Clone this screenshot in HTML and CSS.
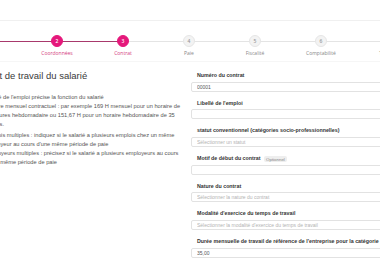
FILE: index.html
```html
<!DOCTYPE html>
<html lang="fr">
<head>
    <meta charset="UTF-8">
    <meta name="viewport" content="width=device-width, initial-scale=1.0">
    <title>Contrat de travail du salarié</title>
    <link rel="stylesheet" href="styles.css">
</head>
<body>
    <header class="topbar"></header>

    <nav class="stepper">
        <div class="step done"><span class="step-dot">1</span><span class="step-label">Salarié</span></div>
        <div class="step done"><span class="step-dot">2</span><span class="step-label">Coordonnées</span></div>
        <div class="step active"><span class="step-dot">3</span><span class="step-label">Contrat</span></div>
        <div class="step"><span class="step-dot">4</span><span class="step-label">Paie</span></div>
        <div class="step"><span class="step-dot">5</span><span class="step-label">Fiscalité</span></div>
        <div class="step"><span class="step-dot">6</span><span class="step-label">Comptabilité</span></div>
        <div class="step"><span class="step-dot">7</span><span class="step-label">Temps</span></div>
    </nav>

    <main class="page">
        <section class="intro">
            <h2>Contrat de travail du salarié</h2>
            <ul class="notes">
                <li>Libellé de l'emploi précise la fonction du salarié</li>
                <li>Horaire mensuel contractuel : par exemple 169 H mensuel pour un horaire de 39 heures hebdomadaire ou 151,67 H pour un horaire hebdomadaire de 35 heures.</li>
            </ul>
            <ul class="notes">
                <li>Emplois multiples : indiquez si le salarié a plusieurs emplois chez un même employeur au cours d'une même période de paie</li>
                <li>Employeurs multiples : précisez si le salarié a plusieurs employeurs au cours d'une même période de paie</li>
            </ul>
        </section>

        <form class="fields">
            <div class="field">
                <label>Numéro du contrat</label>
                <input type="text" value="00001">
            </div>
            <div class="field">
                <label>Libellé de l'emploi</label>
                <input type="text">
            </div>
            <div class="field">
                <label>statut conventionnel (catégories socio-professionnelles)</label>
                <input type="text" placeholder="Sélectionner un statut">
            </div>
            <div class="field">
                <label>Motif de début du contrat <span class="badge">Optionnel</span></label>
                <input type="text">
            </div>
            <div class="field">
                <label>Nature du contrat</label>
                <input type="text" placeholder="Sélectionner la nature du contrat">
            </div>
            <div class="field">
                <label>Modalité d'exercice du temps de travail</label>
                <input type="text" placeholder="Sélectionner la modalité d'exercice du temps de travail">
            </div>
            <div class="field">
                <label>Durée mensuelle de travail de référence de l'entreprise pour la catégorie de salarié</label>
                <input type="text" value="35,00">
            </div>
        </form>
    </main>
</body>
</html>
```

FILE: styles.css
```css
:root {
    --pink: #e5187b;
    --pink-line: #a8396c;
    --grey-line: #e4e4e4;
    --text: #444;
}

* {
    box-sizing: border-box;
}

body {
    margin: 0;
    width: 380px;
    height: 260px;
    overflow: hidden;
    background: #fff;
    font-family: 'Liberation Sans', Arial, sans-serif;
    color: var(--text);
}

/* Top bar */
.topbar {
    height: 21px;
    border-bottom: 1px solid #f0f0f0;
}

/* Stepper */
.stepper {
    display: flex;
    width: 462px;
    margin-left: -42px;
    padding: 14px 0 5px;
    border-bottom: 1px solid #f6f6f6;
}

.step {
    flex: none;
    width: 66px;
    display: flex;
    flex-direction: column;
    align-items: center;
    position: relative;
}

.step::before {
    content: "";
    position: absolute;
    top: 6px;
    left: -33px;
    width: 66px;
    height: 1px;
    background: var(--grey-line);
}

.step:first-child::before {
    display: none;
}

.step.done::before,
.step.active::before {
    background: var(--pink-line);
}

.step-dot {
    position: relative;
    z-index: 1;
    width: 12px;
    height: 12px;
    border-radius: 50%;
    border: 1px solid #e6e6e6;
    background: #f3f3f3;
    color: #999;
    font-family: 'Open Sans', sans-serif;
    font-size: 5px;
    font-weight: 600;
    display: flex;
    align-items: center;
    justify-content: center;
}

.step.done .step-dot,
.step.active .step-dot {
    background: var(--pink);
    border-color: var(--pink);
    color: #fff;
}

.step-label {
    margin-top: 3px;
    font-family: 'Open Sans', sans-serif;
    font-size: 5px;
    line-height: 6px;
    color: #888;
    white-space: nowrap;
}

.step.done .step-label,
.step.active .step-label {
    color: #d43c80;
}

/* Main content */
.page {
    display: flex;
    gap: 5px;
    margin-left: -29px;
    padding-top: 8px;
}

.intro {
    flex: none;
    width: 215px;
}

.intro h2 {
    margin: 0;
    font-size: 9.5px;
    line-height: 12px;
    font-weight: normal;
    color: #3a3a3a;
}

.notes {
    margin: 2.5px 0 0;
    padding-left: 14px;
    font-size: 5.7px;
    line-height: 9px;
    color: #555;
}

.intro h2 + .notes {
    margin-top: 10.5px;
}

/* Form */
.fields {
    flex: none;
    width: 230px;
    margin: 0;
    padding-top: 2px;
}

.field {
    display: flex;
    flex-direction: column;
    margin-bottom: 8.2px;
}

.field label {
    padding-left: 6px;
    margin-bottom: 2.5px;
    font-size: 5.3px;
    line-height: 7px;
    font-weight: bold;
    color: #333;
    white-space: nowrap;
}

.badge {
    margin-left: 2px;
    padding: 0.5px 2px;
    border-radius: 2px;
    background: #eee;
    color: #888;
    font-size: 4.4px;
    font-weight: normal;
}

.field input {
    height: 10px;
    padding: 0 5px;
    border: 1px solid #e2e2e2;
    border-radius: 2px;
    background: #fff;
    font-family: inherit;
    font-size: 5px;
    color: #555;
}

.field input::placeholder {
    color: #b3b3b3;
}
```
